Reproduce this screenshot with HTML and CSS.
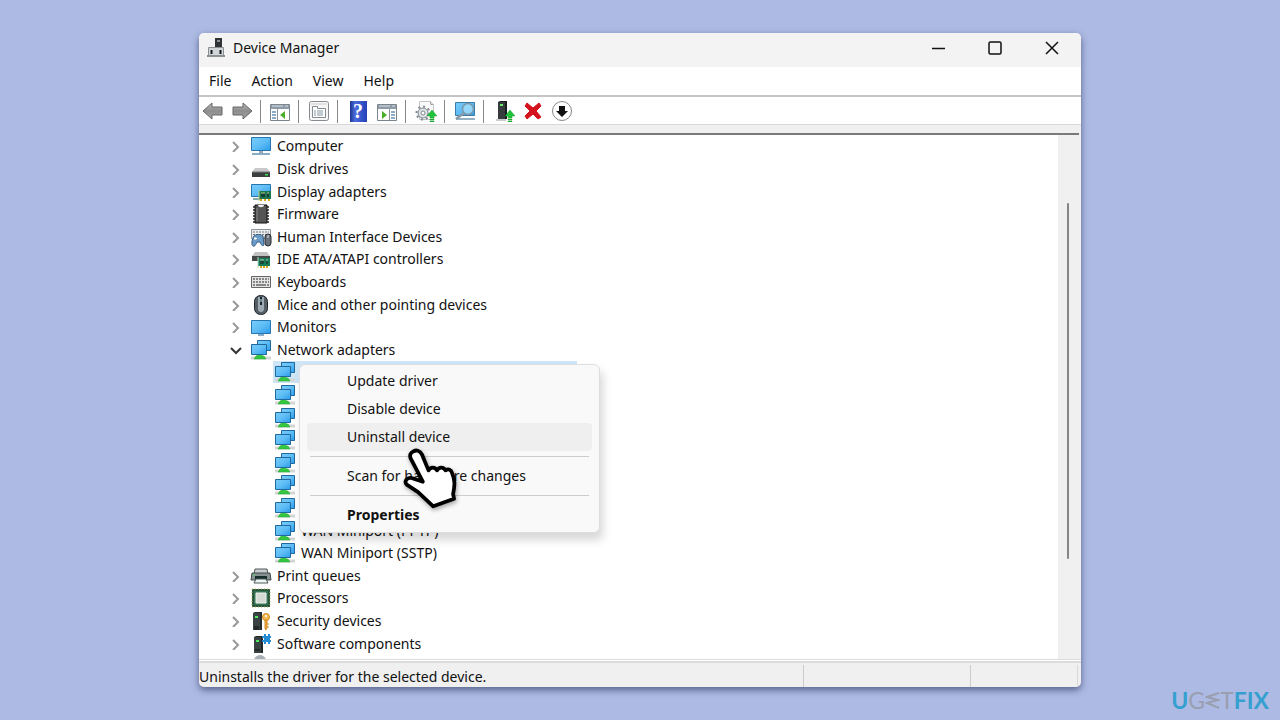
FILE: index.html
```html
<!DOCTYPE html>
<html lang="en">
<head>
<meta charset="utf-8">
<title>Device Manager</title>
<link rel="stylesheet" href="styles.css">
</head>
<body>
<svg class="sprites" aria-hidden="true">
  <defs>
    <linearGradient id="screen" x1="0" y1="0" x2="1" y2="1"><stop offset="0" stop-color="#78cdfb"/><stop offset=".5" stop-color="#5fbdf5"/><stop offset="1" stop-color="#2a9bea"/></linearGradient>
    <linearGradient id="metal" x1="0" y1="0" x2="0" y2="1"><stop offset="0" stop-color="#b5b5b5"/><stop offset=".5" stop-color="#8d8d8d"/><stop offset="1" stop-color="#a5a5a5"/></linearGradient>
  </defs>
  <symbol id="chevron" viewBox="0 0 12 12"><path d="M3 2l5 5-5 5" fill="none" stroke="currentColor" stroke-width="2"/></symbol>
  <symbol id="chevron-down" viewBox="0 0 12 12"><path d="M1 4l5 5 5-5" fill="none" stroke="currentColor" stroke-width="2"/></symbol>
  <symbol id="computer" viewBox="0 0 22 22"><path d="M1.5 2.5h19v13h-19z" fill="url(#screen)" stroke="#2675ae"/><path d="M9 16h4v2H9z" fill="#9ab"/><path d="M2 19h18" stroke="#5f92b5" stroke-width="1.5"/></symbol>
  <symbol id="disk" viewBox="0 0 22 22"><path d="M5 10h12l3 4H2z" fill="#c9c9c9"/><path d="M2 14h18v5H2z" fill="#3c3f40"/><path d="M2 14h18" stroke="#777"/><path d="M15 16h3v1.500h-3z" fill="#37e04d"/></symbol>
  <symbol id="display" viewBox="0 0 22 22"><path d="M1.500 3.500h19v12h-19z" fill="url(#screen)" stroke="#2675ae"/><path d="M3 18h7" stroke="#8aa" stroke-width="2"/><path d="M9 10h12v8H9z" fill="#1f7550"/><path d="M11 12h4v4h-4zM17 12h2v4h-2z" fill="#123f35"/><path d="M11 12h4M17 12h2M9 9v11" stroke="#b5cf87"/><path d="M10 19h2M14 19h2M18 19h2" stroke="#e0a51a" stroke-width="2"/></symbol>
  <symbol id="firmware" viewBox="0 0 22 22"><path d="M5 2h12v18H5z" fill="#555" stroke="#111"/><path d="M3 4h2M3 7h2M3 10h2M3 13h2M3 16h2M3 19h2M17 4h2M17 7h2M17 10h2M17 13h2M17 16h2M17 19h2" stroke="#222" stroke-width="1.600"/><path d="M8 2c0 3 6 3 6 0" fill="#eee"/><path d="M7 5v13" stroke="#888"/></symbol>
  <symbol id="hid" viewBox="0 0 22 22"><path d="M1.500 3.500h19v9h-19z" fill="#ececec" stroke="#8c9299"/><path d="M3 6h16M3 8.500h16" stroke="#73797e" stroke-dasharray="2 1"/><path d="M4 10c3-2 6-2 9 0l1 9c-2 2-3-1-4-3H7c-1 2-2 5-4 4-2-1-1-7 1-10z" fill="#6b9cc8" stroke="#315a82"/><path d="M5 11v3M4 12.500h3" stroke="#fff"/><rect x="15" y="8" width="6" height="12" rx="3" fill="#6a737b" stroke="#252b31"/><path d="M18 9v3" stroke="#ddd"/></symbol>
  <symbol id="ide" viewBox="0 0 22 22"><path d="M5 4h12l3 4H2z" fill="#c2c2c2"/><path d="M2 8h18v5H2z" fill="#454849"/><path d="M8 10h12v8H8z" fill="#177b58"/><path d="M10 12h4v4h-4zM16 12h2v4h-2z" fill="#164c3a"/><path d="M10 12h4M16 12h2M8 9v11" stroke="#b4dbbd"/><path d="M10 19h8" stroke="#e0a51a" stroke-width="2" stroke-dasharray="2 1"/></symbol>
  <symbol id="keyboard" viewBox="0 0 22 22"><path d="M1.500 5.500h19v11h-19z" fill="#e4e4e4" stroke="#666"/><path d="M3 8h16M3 11h16" stroke="#666" stroke-width="1.500" stroke-dasharray="2 1"/><path d="M3 14h2M6 14h10M17 14h2" stroke="#666" stroke-width="1.500"/></symbol>
  <symbol id="mouse" viewBox="0 0 22 22"><rect x="4.500" y="1.500" width="13" height="19" rx="6" fill="#555d65" stroke="#1d252c"/><path d="M8 3v12c0 4 6 4 6 0V3" fill="#9ca8b2"/><path d="M11 3v8" stroke="#17212a" stroke-width="2"/><path d="M11 5v3" stroke="#ccecfc"/></symbol>
  <symbol id="monitor" viewBox="0 0 22 22"><path d="M1.500 4.500h19v13h-19z" fill="url(#screen)" stroke="#2675ae"/><path d="M8 19h6" stroke="#5f92b5" stroke-width="1.500"/></symbol>
  <symbol id="network" viewBox="0 0 22 22"><path d="M7.500 1.500h13v10h-13z" fill="url(#screen)" stroke="#20699e"/><path d="M1 19h20" stroke="#d3d6d5" stroke-width="3"/><path d="M7 15h5v2h2l2 3H4l2-3h1z" fill="#35c642" stroke="#1fa62d" stroke-width=".5"/><path d="M1.500 5.500h15v10h-15z" fill="url(#screen)" stroke="#20699e"/></symbol>
  <symbol id="printer" viewBox="0 0 22 22"><path d="M5 4h12l1 5H4z" fill="#c9cdcd" stroke="#52595b"/><path d="M2 8h18l1 7H1z" fill="#889192" stroke="#41494a"/><path d="M5 11h12v5H5z" fill="#172d2c"/><path d="M6 14h10l2 4H4z" fill="#edf6f2" stroke="#4b5956"/><path d="M3 10h2" stroke="#53e56a"/></symbol>
  <symbol id="processor" viewBox="0 0 22 22"><path d="M3 3h16v16H3z" fill="#377354" stroke="#24563d" stroke-width="2"/><path d="M2 2h18M2 20h18M2 2v18M20 2v18" stroke="#bcad54" stroke-dasharray="1 2"/><path d="M6 6h10v10H6z" fill="#d4d9d4" stroke="#f1f2ef"/></symbol>
  <symbol id="security" viewBox="0 0 22 22"><path d="M3 3l2-1h7v18H3z" fill="#252c2d"/><path d="M3 3h7v17H3z" fill="#394143"/><path d="M5 6h3v2H5z" fill="#4cec61"/><path d="M4 17h5M4 19h5" stroke="#111"/><circle cx="16" cy="7" r="3.500" fill="#f5bd55" stroke="#d28819"/><circle cx="16" cy="6" r="1" fill="#fff"/><path d="M15 10h2v8l-1 2-1-1zM17 14h2M17 17h2" fill="#edaa3d" stroke="#d18c27"/></symbol>
  <symbol id="component" viewBox="0 0 22 22"><path d="M4 4l2-1h7v17H4z" fill="#202728"/><path d="M4 4h7v16H4z" fill="#394143"/><path d="M6 7h3v2H6z" fill="#4cec61"/><path d="M5 17h5" stroke="#111"/><path d="M12 3h2V1h2v2h2V1h2v2h1v2h-1v2h1v2h-1v2h-2V9h-2v2h-2V9h-2V7h2V5h-2z" fill="#258bd2"/></symbol>
  <symbol id="uparrow" viewBox="0 0 10 12"><path d="M5 0l5 6H7v2H3V6H0zM3 9h4v1H3zM3 11h4v1H3z" fill="#21c43a" stroke="#078d20" stroke-width=".4"/></symbol>
</svg>

<main class="window">
  <header class="titlebar">
    <svg class="app-icon" viewBox="0 0 20 20" aria-hidden="true"><path d="M9 0h7v10H9z" fill="#303335"/><path d="M11 2h3v2h-3z" fill="#879093"/><path d="M2.500 9.500h15v9h-15z" fill="#d2d6d8" stroke="#8a8f91"/><path d="M1 17h18v2H1z" fill="#8c9294"/><path d="M5.500 12v4M14.500 12v4" stroke="#16191b" stroke-width="2"/></svg>
    <h1>Device Manager</h1>
    <div class="controls">
      <button aria-label="Minimize"><svg viewBox="0 0 14 14"><path d="M1 7.500h13"/></svg></button>
      <button aria-label="Maximize"><svg viewBox="0 0 14 14"><rect x="1" y="1" width="12" height="12" rx="1.500"/></svg></button>
      <button aria-label="Close"><svg viewBox="0 0 14 14"><path d="M1 1l12 12M13 1L1 13"/></svg></button>
    </div>
  </header>
  <nav class="menubar" aria-label="Menu bar"><button>File</button><button>Action</button><button>View</button><button>Help</button></nav>
  <div class="toolbar" role="toolbar" aria-label="Tools">
    <button aria-label="Back"><svg viewBox="0 0 22 22"><path d="M1 11l9-8v4h10v8H10v4z" fill="url(#metal)" stroke="#666"/></svg></button>
    <button aria-label="Forward"><svg viewBox="0 0 22 22"><path d="M21 11l-9-8v4H2v8h10v4z" fill="url(#metal)" stroke="#666"/></svg></button>
    <span class="divider"></span>
    <button aria-label="Console tree"><svg viewBox="0 0 22 22"><path d="M1.500 4.500h19v16h-19z" fill="#fff" stroke="#7b858d"/><path d="M2 5h18v4H2z" fill="#8e9ba6"/><path d="M3 6h11M16 6h3" stroke="#d6e0e7"/><path d="M8.500 9v11" stroke="#87929a"/><path d="M3 12h4M3 15h4M3 18h4" stroke="#6790b6" stroke-width="1.500"/><path d="M16 11v8l-5-4z" fill="#4bae2a"/></svg></button>
    <span class="divider"></span>
    <button aria-label="Properties"><svg viewBox="0 0 22 22"><rect x="1.500" y="1.500" width="19" height="19" rx="2" fill="#f6f6f6" stroke="#858b90"/><path d="M3 4h16" stroke="#ccc"/><path d="M4.500 6.500h5v2h8v9h-13z" fill="#fff" stroke="#858b90"/><path d="M6 11h2M9 11h6M6 13h2M9 13h6M6 15h2M9 15h6" stroke="#8496a3"/></svg></button>
    <span class="divider"></span>
    <button aria-label="Help"><span class="help-book">?</span></button>
    <button aria-label="Action pane"><svg viewBox="0 0 22 22"><path d="M1.500 4.500h19v16h-19z" fill="#fff" stroke="#7b858d"/><path d="M2 5h18v4H2z" fill="#8e9ba6"/><path d="M3 6h11M16 6h3" stroke="#d6e0e7"/><path d="M13.500 9v11" stroke="#87929a"/><path d="M15 12h4M15 15h4M15 18h4" stroke="#6790b6" stroke-width="1.500"/><path d="M6 11v8l5-4z" fill="#4bae2a"/></svg></button>
    <span class="divider"></span>
    <button aria-label="Update driver"><svg viewBox="0 0 22 22"><path d="M4.500 1.500h11l3 3v15h-14z" fill="#fafafa" stroke="#c5c5c5"/><path d="M15.500 1.500v3h3" fill="#ddd" stroke="#aaa"/><circle cx="8" cy="13" r="5" fill="#dfe4e6" stroke="#7f8a90"/><circle cx="8" cy="13" r="6.500" fill="none" stroke="#7f8a90" stroke-width="2" stroke-dasharray="2 3"/><circle cx="8" cy="13" r="2" fill="#fff" stroke="#7f8a90"/><use href="#uparrow" x="12" y="10" width="10" height="12"/></svg></button>
    <span class="divider"></span>
    <button aria-label="Scan for hardware changes"><svg viewBox="0 0 22 22"><path d="M1.500 2.500h19v13h-19z" fill="url(#screen)" stroke="#397da7"/><path d="M2 19h19" stroke="#7198ac" stroke-width="1.500"/><path d="M10 13l-8 6" stroke="#879aa5" stroke-width="2.500"/><circle cx="14" cy="9" r="5.500" fill="#a3dffb" fill-opacity=".8" stroke="#7b98aa" stroke-width="1.500"/></svg></button>
    <span class="divider"></span>
    <button aria-label="Update device"><svg viewBox="0 0 22 22"><path d="M5 2l2-1h7v18H5z" fill="#181d1d"/><path d="M5 2h7v17H5z" fill="#363c3d"/><path d="M7 4h3v2H7z" fill="#65ef6b"/><path d="M3 20h10" stroke="#999"/><use href="#uparrow" x="12" y="10" width="10" height="12"/></svg></button>
    <button aria-label="Uninstall device"><svg viewBox="0 0 22 22"><path d="M5 3l6 5 6-5 2 3-5 5 5 6-3 2-5-5-6 5-2-3 5-5-5-5z" fill="#d3131d" stroke="#d3131d"/></svg></button>
    <button aria-label="Disable device"><svg viewBox="0 0 22 22"><circle cx="11" cy="11" r="9.500" fill="#fff" stroke="#888"/><path d="M8 6h6v5h3l-6 6-6-6h3z" fill="#111"/></svg></button>
  </div>
  <div class="band"></div>
  <section class="pane">
    <ul class="tree" aria-label="Devices">
      <li><svg class="chev"><use href="#chevron"/></svg><svg class="icon"><use href="#computer"/></svg><span>Computer</span></li>
      <li><svg class="chev"><use href="#chevron"/></svg><svg class="icon"><use href="#disk"/></svg><span>Disk drives</span></li>
      <li><svg class="chev"><use href="#chevron"/></svg><svg class="icon"><use href="#display"/></svg><span>Display adapters</span></li>
      <li><svg class="chev"><use href="#chevron"/></svg><svg class="icon"><use href="#firmware"/></svg><span>Firmware</span></li>
      <li><svg class="chev"><use href="#chevron"/></svg><svg class="icon"><use href="#hid"/></svg><span>Human Interface Devices</span></li>
      <li><svg class="chev"><use href="#chevron"/></svg><svg class="icon"><use href="#ide"/></svg><span>IDE ATA/ATAPI controllers</span></li>
      <li><svg class="chev"><use href="#chevron"/></svg><svg class="icon"><use href="#keyboard"/></svg><span>Keyboards</span></li>
      <li><svg class="chev"><use href="#chevron"/></svg><svg class="icon"><use href="#mouse"/></svg><span>Mice and other pointing devices</span></li>
      <li><svg class="chev"><use href="#chevron"/></svg><svg class="icon"><use href="#monitor"/></svg><span>Monitors</span></li>
      <li><svg class="chev open"><use href="#chevron-down"/></svg><svg class="icon"><use href="#network"/></svg><span>Network adapters</span></li>
      <li class="child selected"><div class="selection"><svg class="icon"><use href="#network"/></svg></div>
        <div class="context-menu" role="menu">
          <button role="menuitem">Update driver</button>
          <button role="menuitem">Disable device</button>
          <button role="menuitem" class="hover">Uninstall device</button>
          <hr>
          <button role="menuitem">Scan for hardware changes</button>
          <hr>
          <button role="menuitem" class="default">Properties</button>
          <svg class="pointer" viewBox="0 0 56 66" aria-hidden="true"><path d="M12 6c3-2 7-1 9 3l7 17c2-4 7-4 9 0 2-4 7-4 9 0 3-2 6-1 7 3 3 7 3 12 1 22l1 5-22 8-16-15-12-8c-3-3 0-8 5-7l12 4L9 13c-1-3 0-6 3-7z" fill="#fff" stroke="#000" stroke-width="4" stroke-linejoin="round"/></svg>
        </div>
      </li>
      <li class="child"><svg class="icon"><use href="#network"/></svg></li>
      <li class="child"><svg class="icon"><use href="#network"/></svg></li>
      <li class="child"><svg class="icon"><use href="#network"/></svg></li>
      <li class="child"><svg class="icon"><use href="#network"/></svg></li>
      <li class="child"><svg class="icon"><use href="#network"/></svg></li>
      <li class="child"><svg class="icon"><use href="#network"/></svg></li>
      <li class="child"><svg class="icon"><use href="#network"/></svg><span>WAN Miniport (PPTP)</span></li>
      <li class="child"><svg class="icon"><use href="#network"/></svg><span>WAN Miniport (SSTP)</span></li>
      <li><svg class="chev"><use href="#chevron"/></svg><svg class="icon"><use href="#printer"/></svg><span>Print queues</span></li>
      <li><svg class="chev"><use href="#chevron"/></svg><svg class="icon"><use href="#processor"/></svg><span>Processors</span></li>
      <li><svg class="chev"><use href="#chevron"/></svg><svg class="icon"><use href="#security"/></svg><span>Security devices</span></li>
      <li><svg class="chev"><use href="#chevron"/></svg><svg class="icon"><use href="#component"/></svg><span>Software components</span></li>
      <li class="partial"><span class="disc"></span></li>
    </ul>
    <div class="scrollbar"><div class="thumb"></div></div>
  </section>
  <footer class="status"><p>Uninstalls the driver for the selected device.</p><span></span><span></span></footer>
</main>
<div class="brand"><b>U</b><span>G</span><svg viewBox="0 0 15 18" aria-hidden="true"><path d="M14 2L2 6l11 3-11 3 12 5" fill="none" stroke="currentColor" stroke-width="2"/></svg><span>T</span><b>FIX</b></div>
</body>
</html>
```
FILE: styles.css
```css
* { box-sizing: border-box; }
body {
  margin: 0;
  min-height: 100vh;
  padding: 33px 199px;
  display: flex;
  background: #adbae3;
  color: #111;
  font: 14px/20px "Noto Sans", "Open Sans", sans-serif;
}
button { border: 0; padding: 0; background: none; color: inherit; font: inherit; }
svg { display: block; flex: none; }
.sprites { position: absolute; width: 0; height: 0; }

.window {
  flex: 1;
  display: flex;
  flex-direction: column;
  background: #f0f0f0;
  border-radius: 5px;
  box-shadow: 0 3px 7px rgba(30, 40, 80, .6);
}
.titlebar {
  height: 34px;
  display: flex;
  align-items: center;
  gap: 7px;
  padding: 0 1px 4px 7px;
  background: #f3f3f3;
  border-radius: 5px 5px 0 0;
}
.app-icon { width: 20px; height: 20px; }
h1 { margin: 0; font-size: 14px; font-weight: 400; }
.controls { margin-left: auto; display: flex; height: 30px; }
.controls button { width: 57px; display: flex; align-items: center; justify-content: center; }
.controls svg { width: 14px; height: 14px; fill: none; stroke: #111; stroke-width: 1.5; }

.menubar {
  height: 28px;
  display: flex;
  gap: 20px;
  padding-left: 10px;
  background: #fff;
}
.toolbar {
  height: 30px;
  display: flex;
  align-items: center;
  gap: 7px;
  padding: 1px 3px 0;
  background: #fff;
  border-top: 2px solid #c4c4c4;
  border-bottom: 1px solid #d8d8d8;
}
.toolbar button, .toolbar svg { width: 22px; height: 22px; }
.divider { width: 1px; height: 23px; margin-right: 2px; background: #888; }
.divider:first-of-type { margin-right: 1px; }
.help-book {
  display: block;
  width: 17px;
  height: 21px;
  margin: 0 auto;
  background: linear-gradient(90deg, #1c368c, #4a6cdd 30%, #2440b8);
  color: #fff;
  font: bold 20px/21px "Liberation Serif", serif;
}
.band { height: 8px; }

.pane {
  flex: 1;
  display: flex;
  min-height: 0;
  margin-right: 2px;
  border-top: 2px solid #7a7a7a;
  background: #fff;
}
.tree {
  flex: 1;
  display: grid;
  grid-template-rows: repeat(23, minmax(0, 1fr)) 4px;
  margin: 0;
  padding: 0;
  list-style: none;
}
.tree li { position: relative; display: flex; align-items: center; padding-left: 31px; }
.tree .child { padding-left: 75px; }
.tree span { margin-left: 5px; }
.chev { width: 12px; height: 12px; margin-right: 8px; color: #999; }
.chev.open { color: #333; }
.icon { width: 22px; height: 22px; }
.tree .selected { padding-left: 74px; z-index: 1; }
.selection { width: 304px; height: 22px; padding-left: 1px; background: #cce6f8; }
.tree .partial { padding-left: 55px; overflow: hidden; align-items: flex-start; }
.tree .disc { width: 12px; height: 12px; flex: none; margin: 0; border-radius: 50%; background: #a9b0b5; }

.context-menu {
  position: absolute;
  top: 3px;
  left: 100px;
  width: 301px;
  padding: 2px 7px 3px;
  display: flex;
  flex-direction: column;
  background: #f9f9f9;
  border: 1px solid #dedede;
  border-radius: 6px;
  box-shadow: 3px 7px 10px rgba(0, 0, 0, .16);
}
.context-menu button { height: 28px; padding-left: 40px; text-align: left; border-radius: 4px; }
.context-menu .hover { background: #efefef; }
.context-menu .default { font-weight: 700; }
.context-menu hr { width: 279px; height: 1px; margin: 5px auto; border: 0; background: #ccc; }
.pointer {
  position: absolute;
  left: 102px;
  top: 79px;
  width: 53px;
  height: 66px;
  overflow: visible;
  filter: drop-shadow(1px 2px 2px rgba(0, 0, 0, .35));
}

.scrollbar { width: 21px; padding: 68px 10px 0 0; background: #f0f0f0; }
.thumb { width: 2px; height: 356px; margin-left: auto; border-radius: 1px; background: #858585; }

.status { height: 28px; display: flex; border-top: 1px solid #ddd; box-shadow: inset 0 1px #fff, inset 0 3px #dcdcdc; border-radius: 0 0 5px 5px; padding: 5px 3px 0 0; }
.status p { flex: 1; margin: 0; padding-top: 2px; }
.status span { width: 167px; border-left: 1px solid #ccc; }
.status span:last-child { width: 108px; border-right: 1px solid #d8d8d8; }

.brand {
  position: absolute;
  right: 11px;
  bottom: 5px;
  display: flex;
  align-items: center;
  color: #999faf;
  font: 23px/30px Lato, sans-serif;
}
.brand b { color: #35a0cf; }
.brand svg { width: 15px; height: 18px; }
```
